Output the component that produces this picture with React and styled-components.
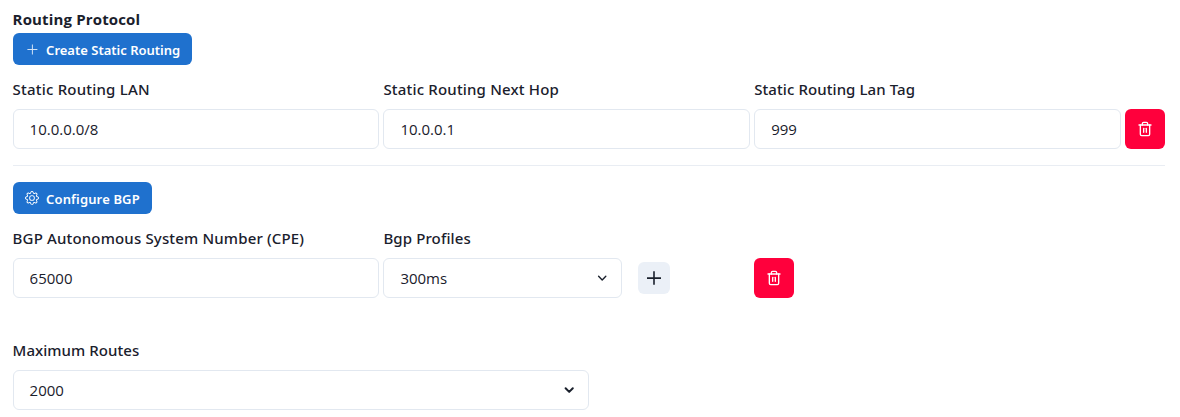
import React from "react";
import styled, { createGlobalStyle } from "styled-components";
import { BsGear } from "react-icons/bs";
import { FiTrash2 } from "react-icons/fi";

const GlobalStyle = createGlobalStyle`
  *, *::before, *::after { box-sizing: border-box; }
  body {
    margin: 0;
    background: #fff;
    color: #1a202c;
    font-family: "Open Sans", "Noto Sans", sans-serif;
    font-size: 15px;
  }
  button, input { font: inherit; color: inherit; }
`;

const Form = styled.main`
  display: flex;
  flex-direction: column;
  align-items: stretch;
  padding: 7px 15px 7px 12.6px;
`;

const Title = styled.h2`
  margin: 0;
  height: 26px;
  font-size: 15px;
  font-weight: 700;
  line-height: 25px;
  letter-spacing: 0.15px;
`;

const ActionButton = styled.button`
  display: flex;
  align-items: center;
  align-self: flex-start;
  width: ${(p) => p.$width}px;
  height: 32px;
  margin: 0 0 12px;
  padding: 0 0 0 12px;
  gap: 7.5px;
  border: 0;
  border-radius: 6px;
  background: #1f71ce;
  color: #fff;
  font-family: "Noto Sans", sans-serif;
  font-size: 13px;
  font-weight: 600;
  line-height: 18px;
  letter-spacing: ${(p) => p.$tracking || 0}px;
  white-space: nowrap;

  svg {
    flex: none;
  }

  span {
    padding-top: 1px;
  }
`;

const FieldGrid = styled.div`
  display: grid;
  grid-template-columns: repeat(3, 1fr) 40px;
  column-gap: 4px;
  align-items: end;
`;

const Field = styled.div`
  display: flex;
  flex-direction: column;
  gap: 8px;
  min-width: 0;
`;

const Label = styled.label`
  height: 24px;
  font-family: "Noto Sans", sans-serif;
  font-size: 15px;
  font-weight: 500;
  line-height: 24px;
  letter-spacing: ${(p) => p.$tracking || 0}px;
  white-space: nowrap;
`;

const TextInput = styled.input`
  width: 100%;
  height: 40px;
  padding: 0 16px 1px;
  border: 1px solid #e2e8f0;
  border-radius: 6px;
  background: #fff;
  outline: none;
`;

const SelectBox = styled.div`
  display: flex;
  align-items: center;
  justify-content: space-between;
  flex: 1;
  height: 40px;
  padding: 0 12px 0 16px;
  border: 1px solid #e2e8f0;
  border-radius: 6px;

  span { padding-bottom: 1px; }
`;

const SelectRow = styled.div`
  display: flex;
  align-items: center;
  gap: 16px;
  padding-right: 80px;
`;

const IconButton = styled.button`
  display: flex;
  align-items: center;
  justify-content: center;
  flex: none;
  width: ${(p) => p.$size}px;
  height: ${(p) => p.$size}px;
  padding: 0;
  border: 0;
  border-radius: 6px;
  background: ${(p) => (p.$danger ? "#ff003c" : "#ebf0f7")};
  color: ${(p) => (p.$danger ? "#fff" : "#1a202c")};
`;

const Divider = styled.hr`
  width: 100%;
  height: 1px;
  margin: 16px 0;
  border: 0;
  background: #e9edf3;
`;

const RoutesField = styled(Field)`
  width: 50%;
  margin-top: 40px;
`;

const SelectSlot = styled.div`
  display: flex;
`;

function SmallPlus() {
  return (
    <svg width="14" height="14" viewBox="0 0 14 14" stroke="currentColor" strokeWidth="1" opacity="0.8">
      <path d="M2.4 7.5h10M7.4 2.5v10" />
    </svg>
  );
}

function LargePlus() {
  return (
    <svg width="16" height="16" viewBox="0 0 16 16" fill="none" stroke="currentColor" strokeWidth="1.6">
      <path d="M1 8.1h14M8 1.2v13.6" />
    </svg>
  );
}

function Chevron({ weight }) {
  return (
    <svg width="14" height="14" viewBox="0 0 14 14" fill="none" stroke="currentColor" strokeWidth={weight} strokeLinecap="round" strokeLinejoin="round">
      <path d="M3.6 5.3 7.2 8.9l3.6-3.6" />
    </svg>
  );
}

function DeleteButton({ label }) {
  return (
    <IconButton $size={40} $danger aria-label={label}>
      <FiTrash2 size={16} />
    </IconButton>
  );
}

function TextField({ id, label, value, tracking }) {
  return (
    <Field>
      <Label htmlFor={id} $tracking={tracking}>{label}</Label>
      <TextInput id={id} defaultValue={value} />
    </Field>
  );
}

export default function App() {
  return (
    <>
      <GlobalStyle />
      <Form>
        <Title>Routing Protocol</Title>
        <ActionButton $width={179}>
          <SmallPlus />
          <span>Create Static Routing</span>
        </ActionButton>
        <FieldGrid>
          <TextField id="lan" label="Static Routing LAN" value="10.0.0.0/8" tracking={0.2} />
          <TextField id="hop" label="Static Routing Next Hop" value="10.0.0.1" tracking={0.18} />
          <TextField id="tag" label="Static Routing Lan Tag" value="999" tracking={0.08} />
          <DeleteButton label="Delete static route" />
        </FieldGrid>
        <Divider />
        <ActionButton $width={139} $tracking={0.14}>
          <BsGear size={14} />
          <span>Configure BGP</span>
        </ActionButton>
        <FieldGrid>
          <TextField id="asn" label="BGP Autonomous System Number (CPE)" value="65000" tracking={0.16} />
          <Field>
            <Label $tracking={0.12}>Bgp Profiles</Label>
            <SelectRow>
              <SelectBox>
                <span>300ms</span>
                <Chevron weight={1.4} />
              </SelectBox>
              <IconButton $size={32} aria-label="Add profile">
                <LargePlus />
              </IconButton>
            </SelectRow>
          </Field>
          <DeleteButton label="Delete BGP configuration" />
        </FieldGrid>
        <RoutesField>
          <Label $tracking={0.05}>Maximum Routes</Label>
          <SelectSlot>
            <SelectBox>
              <span>2000</span>
              <Chevron weight={2} />
            </SelectBox>
          </SelectSlot>
        </RoutesField>
      </Form>
    </>
  );
}
